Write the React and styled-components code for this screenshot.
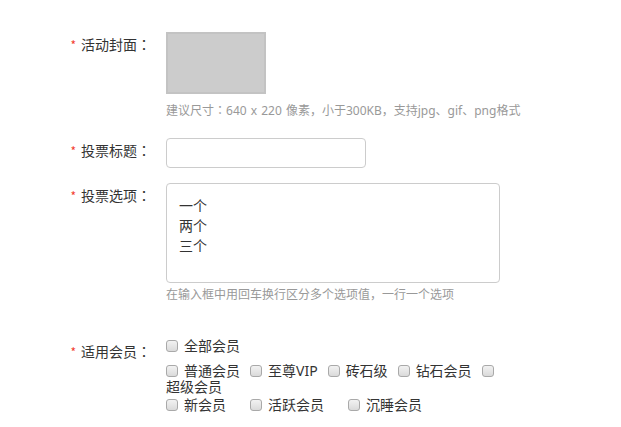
import React from 'react';
import styled, { createGlobalStyle } from 'styled-components';

const GlobalStyle = createGlobalStyle`
  html, body {
    margin: 0;
    padding: 0;
    background: #fff;
  }
  body {
    font-family: "Noto Sans", "Noto Sans CJK SC", sans-serif;
    font-size: 14px;
    color: #333;
  }
`;

const Form = styled.div`
  padding-top: 32px;
  width: 621px;
`;

const Row = styled.div`
  display: flex;
  align-items: flex-start;
  margin-bottom: ${p => p.gap || 0}px;
`;

const Label = styled.div`
  width: 151px;
  height: 20px;
  margin-right: 15px;
  margin-top: 2px;
  text-align: right;
  line-height: 20px;
  flex-shrink: 0;
  color: #333;
`;

const Star = styled.span`
  font-family: "Noto Sans CJK SC", sans-serif;
  color: #f23b30;
  font-size: 12px;
  margin-right: 5px;
`;

/* centred full-width colon, as in the original UI font */
const Colon = styled.span`
  font-family: "Noto Sans CJK JP", "Noto Sans CJK SC", sans-serif;
`;

const Field = styled.div`
  display: flex;
  flex-direction: column;
  align-items: flex-start;
`;

const Cover = styled.div`
  width: 100px;
  height: 62px;
  box-sizing: border-box;
  background: #cccccc;
  border: 2px solid #c3c3c3;
`;

const Hint = styled.div`
  font-size: 12px;
  line-height: 16px;
  height: 16px;
  color: #999;
  margin-top: ${p => p.top || 0}px;
  white-space: nowrap;
  word-spacing: 1px;
`;

const TextInput = styled.input`
  width: 200px;
  height: 30px;
  box-sizing: border-box;
  border: 1px solid #ccc;
  border-radius: 4px;
  outline: none;
  padding: 0 10px;
  font: inherit;
`;

const TextArea = styled.textarea`
  width: 334px;
  height: 100px;
  box-sizing: border-box;
  border: 1px solid #ccc;
  border-radius: 4px;
  padding: 12px 12px;
  font: inherit;
  line-height: 20px;
  color: #333;
  resize: none;
  outline: none;
  display: block;
`;

const CheckGroup = styled.div`
  width: 334px;
  margin-top: -1px;
`;

const CheckLine = styled.div`
  line-height: 16px;
  margin-top: ${p => p.top || 0}px;
  margin-bottom: ${p => p.bottom || 0}px;
`;

const Option = styled.label`
  display: inline;
`;

const Box = styled.input.attrs({ type: 'checkbox' })`
  appearance: none;
  -webkit-appearance: none;
  width: 12px;
  height: 12px;
  margin: 0 6px 0 0;
  box-sizing: border-box;
  border: 1px solid #a9a9a9;
  border-radius: 3px;
  background: linear-gradient(#f2f2f2, #dadada);
  vertical-align: -1px;
`;

const OptionText = styled.span`
  margin-right: ${p => p.space}px;
`;

function Check({ text, space = 10 }) {
  return (
    <Option>
      <Box />
      {'\u200B'}
      <OptionText space={space}>{text}</OptionText>
    </Option>
  );
}

function FieldLabel({ children }) {
  return (
    <Label>
      <Star>*</Star>
      {children}
      <Colon>：</Colon>
    </Label>
  );
}

const levels = ['普通会员', '至尊VIP', '砖石级', '钻石会员', '超级会员'];
const groups = ['新会员', '活跃会员', '沉睡会员'];

export default function App() {
  return (
    <>
      <GlobalStyle />
      <Form>
        <Row gap={20}>
          <FieldLabel>活动封面</FieldLabel>
          <Field>
            <Cover />
            <Hint top={8}>
              建议尺寸<Colon>：</Colon>640 x 220 像素，小于300KB，支持jpg、gif、png格式
            </Hint>
          </Field>
        </Row>
        <Row gap={15}>
          <FieldLabel>投票标题</FieldLabel>
          <Field>
            <TextInput />
          </Field>
        </Row>
        <Row gap={36}>
          <FieldLabel>投票选项</FieldLabel>
          <Field>
            <TextArea defaultValue={'一个\n两个\n三个'} />
            <Hint top={4}>在输入框中用回车换行区分多个选项值，一行一个选项</Hint>
          </Field>
        </Row>
        <Row>
          <FieldLabel>适用会员</FieldLabel>
          <CheckGroup>
            <CheckLine bottom={9}>
              <Check text="全部会员" />
            </CheckLine>
            <CheckLine>
              {levels.map(l => <Check key={l} text={l} />)}
            </CheckLine>
            <CheckLine top={2}>
              {groups.map(g => <Check key={g} text={g} space={24} />)}
            </CheckLine>
          </CheckGroup>
        </Row>
      </Form>
    </>
  );
}
